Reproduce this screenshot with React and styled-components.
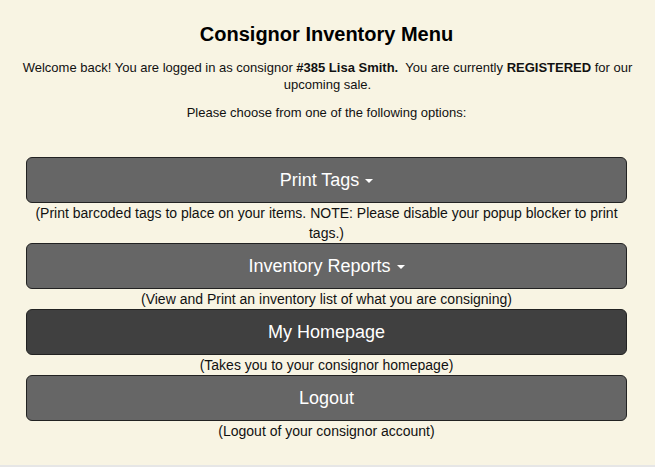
import React from "react"
import styled, { createGlobalStyle } from "styled-components"

const GlobalStyle = createGlobalStyle`
  html, body {
    margin: 0;
    padding: 0;
    background: #e6e6e6;
  }
  body {
    font-family: "Liberation Sans", Arial, sans-serif;
    color: #111;
  }
`

let Page = styled.div`
  background: #f8f4e3;
  height: 465px;
  padding: 0 28px 0 26px;
  box-sizing: border-box;
  text-align: center;
  overflow: hidden;
`

let Title = styled.h1`
  font-size: 20px;
  font-weight: bold;
  margin: 0;
  padding-top: 23px;
  line-height: 23px;
  color: #000;
`

let Intro = styled.p`
  font-size: 13px;
  line-height: 17px;
  margin: 13px -12px 0 -10px;
`

let Prompt = styled.p`
  font-size: 13px;
  line-height: 17px;
  margin: 11px 0 0 0;
`

let Menu = styled.div`
  display: flex;
  flex-direction: column;
  margin-top: 36px;
`

let MenuItem = styled.div`
  display: flex;
  flex-direction: column;
`

let Button = styled.button`
  display: flex;
  align-items: center;
  justify-content: center;
  gap: 6px;
  width: 100%;
  height: 46px;
  border: 1px solid #222;
  border-radius: 6px;
  background: ${p => (p.$active ? "#404040" : "#666666")};
  color: #fff;
  font-family: "Liberation Sans", Arial, sans-serif;
  font-size: 18px;
  padding: 0;
  cursor: pointer;
`

let Caret = styled.span`
  display: inline-block;
  width: 0;
  height: 0;
  border-left: 4px solid transparent;
  border-right: 4px solid transparent;
  border-top: 4px solid #fff;
  margin-top: 2px;
`

let Note = styled.div`
  font-size: 14px;
  line-height: 20px;
  color: #111;
`

const items = [
  { label: "Print Tags", dropdown: true, note: "(Print barcoded tags to place on your items. NOTE: Please disable your popup blocker to print tags.)" },
  { label: "Inventory Reports", dropdown: true, note: "(View and Print an inventory list of what you are consigning)" },
  { label: "My Homepage", active: true, note: "(Takes you to your consignor homepage)" },
  { label: "Logout", note: "(Logout of your consignor account)" },
]

export default function App() {
  return (
    <>
      <GlobalStyle />
      <Page>
        <Title>Consignor Inventory Menu</Title>
        <Intro>
          Welcome back! You are logged in as consignor <b>#385 Lisa Smith.</b>&nbsp; You are currently <b>REGISTERED</b> for our upcoming sale.
        </Intro>
        <Prompt>Please choose from one of the following options:</Prompt>
        <Menu>
          {items.map(item => (
            <MenuItem key={item.label}>
              <Button $active={item.active}>
                {item.label}
                {item.dropdown && <Caret />}
              </Button>
              <Note>{item.note}</Note>
            </MenuItem>
          ))}
        </Menu>
      </Page>
    </>
  )
}
